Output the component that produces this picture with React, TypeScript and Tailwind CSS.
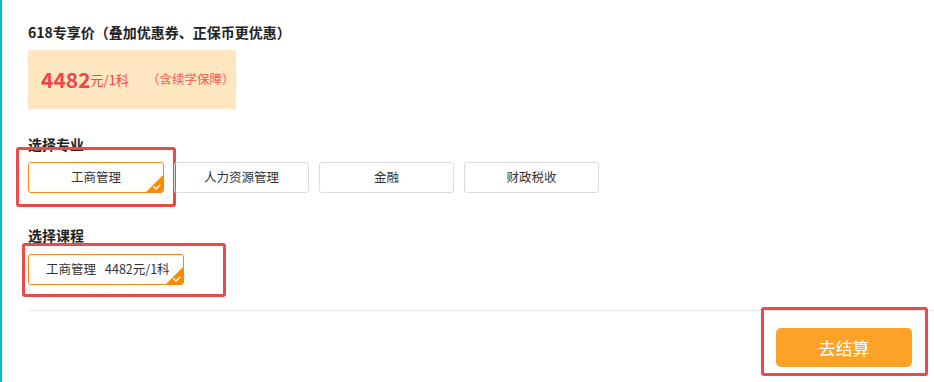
import React from "react";

const font = { fontFamily: '"Noto Sans CJK SC", "Noto Sans", sans-serif' };

function Corner() {
  return (
    <svg className="absolute bottom-0 right-0" width="17" height="17" viewBox="0 0 17 17">
      <polygon points="17,0 17,17 0,17" fill="#ff8a00" />
      <path d="M7.5 11.5 L10 14 L14 10" fill="none" stroke="#fff" strokeWidth="1.4" strokeLinecap="round" strokeLinejoin="round" />
    </svg>
  );
}

export default function App() {
  const majors = ["工商管理", "人力资源管理", "金融", "财政税收"];
  return (
    <div
      className="relative h-[382px] w-[934px] overflow-hidden bg-white border-l-2 border-[#15b3c4] pl-[26px] pt-[22px] text-[#333]"
      style={font}
    >
      <div className="text-[14px] font-bold leading-[20px] text-[#222]">618专享价（叠加优惠券、正保币更优惠）</div>

      <div className="mt-[8px] flex h-[59px] w-[208px] items-center bg-[#fee6c0] pl-[13px] text-[#f0454a]">
        <span className="text-[21px] font-bold leading-none">4482</span>
        <span className="text-[13px] leading-none">元/1科</span>
        <span className="ml-[18px] text-[12.5px] leading-none text-[#f25959]">（含续学保障）</span>
      </div>

      <div className="mt-[25px] text-[14px] font-bold leading-[20px] text-[#222]">选择专业</div>
      <div className="mt-[8px] flex gap-[10px]">
        {majors.map((m, i) => (
          <div key={m} className="relative">
            <div
              className={
                i === 0
                  ? "relative flex h-[31px] w-[136px] items-center justify-center overflow-hidden rounded-[3px] border border-[#f88a1c] text-[12.5px] text-[#333]"
                  : "relative flex h-[31px] w-[135px] items-center justify-center overflow-hidden rounded-[3px] border border-[#dcdcdc] text-[12.5px] text-[#333]"
              }
            >
              {m}
              {i === 0 && <Corner />}
            </div>
            {i === 0 && (
              <div className="pointer-events-none absolute -left-[12px] -top-[15px] -right-[12px] -bottom-[14px] rounded-[3px] border-[3px] border-[#e94b4b]" />
            )}
          </div>
        ))}
      </div>

      <div className="mt-[32px] text-[14px] font-bold leading-[20px] text-[#222]">选择课程</div>
      <div className="mt-[9px] flex">
        <div className="relative">
          <div className="relative flex h-[31px] w-[156px] items-center overflow-hidden rounded-[3px] border border-[#f88a1c] pl-[17px] text-[12.5px] text-[#333]">
            <span>工商管理</span>
            <span className="ml-[9px]">4482元/1科</span>
            <Corner />
          </div>
          <div className="pointer-events-none absolute -left-[6px] -top-[11px] -right-[42px] -bottom-[12px] rounded-[3px] border-[3px] border-[#e94b4b]" />
        </div>
      </div>

      <div className="mt-[25px] h-px bg-[#e8e8e8]" />

      <div className="mt-[17px] flex justify-end pr-[22px]">
        <div className="relative">
          <button className="flex h-[39px] w-[136px] items-center justify-center rounded-[5px] bg-[#fda228] text-[17px] text-white">
            去结算
          </button>
          <div className="pointer-events-none absolute -left-[15px] -top-[21px] -right-[16px] -bottom-[9px] rounded-[3px] border-[3px] border-[#e94b4b]" />
        </div>
      </div>
    </div>
  );
}
